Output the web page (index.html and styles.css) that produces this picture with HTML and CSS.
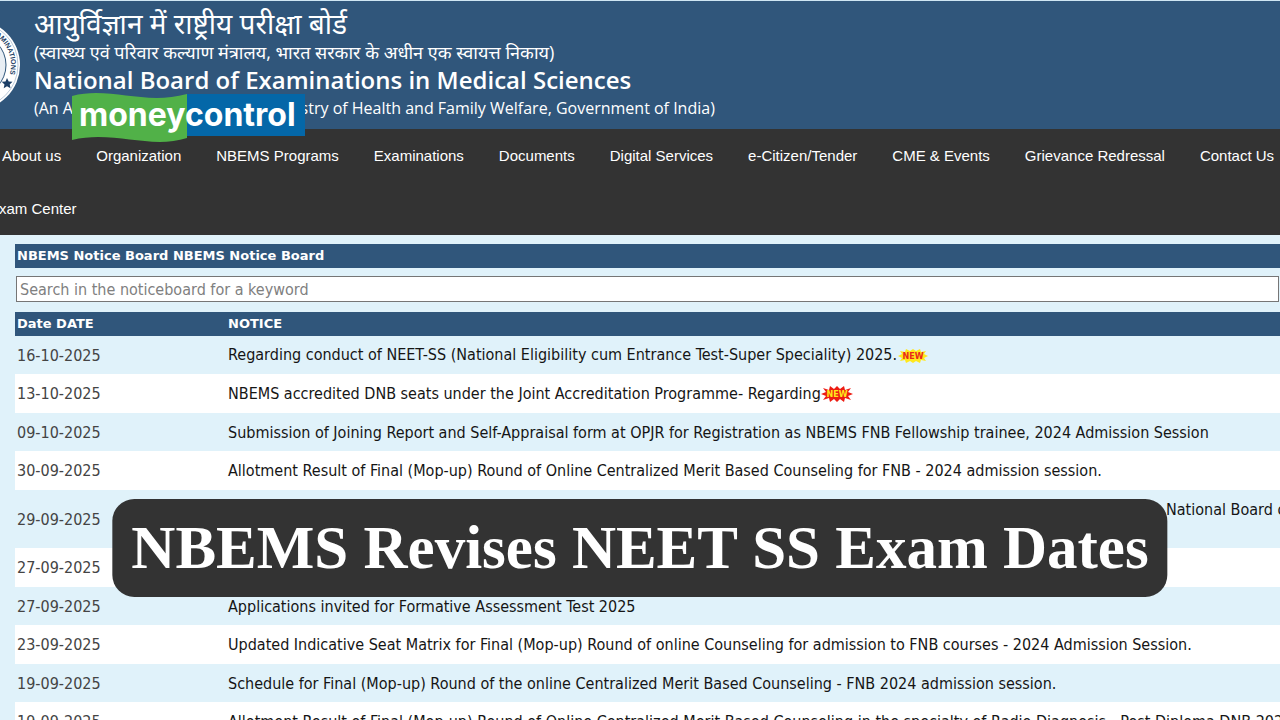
FILE: index.html
```html
<!DOCTYPE html>
<html lang="en">
<head>
<meta charset="utf-8">
<title>National Board of Examinations in Medical Sciences</title>
<link rel="stylesheet" href="styles.css">
</head>
<body>
<header class="masthead">
  <svg class="seal" viewBox="0 0 20 90" aria-hidden="true">
    <defs><path id="ring" d="M-61 45 A36 36 0 1 1 9.800 54.300"/></defs>
    <circle cx="-25" cy="45" r="45" fill="#fff"/>
    <circle cx="-25" cy="45" r="43" fill="none" stroke="#8fa6bf" stroke-width=".6"/>
    <circle cx="-25" cy="45" r="31" fill="#e8eef4" stroke="#2f567b" stroke-width="1"/>
    <text class="seal-text"><textPath href="#ring" startOffset="100%">EXAMINATIONS</textPath></text>
    <path d="M7 58l1.700 3.400 3.800.4-2.800 2.600.8 3.800-3.500-1.900-3.300 1.900.8-3.800-2.800-2.600 3.800-.4z" fill="#1d3f66"/>
  </svg>
  <div class="titles">
    <p class="hindi-name" lang="hi">आयुर्विज्ञान में राष्ट्रीय परीक्षा बोर्ड</p>
    <p class="hindi-sub" lang="hi">(स्वास्थ्य एवं परिवार कल्याण मंत्रालय, भारत सरकार के अधीन एक स्वायत्त निकाय)</p>
    <h1 class="name">National Board of Examinations in Medical Sciences</h1>
    <p class="sub">(An Autonomous Society of the Ministry of Health and Family Welfare, Government of India)</p>
  </div>
  <div class="sponsor">
    <svg class="sponsor-flag" viewBox="0 0 233 50" aria-hidden="true">
      <path d="M114 1h119v42H114z" fill="#0467a8"/>
      <path d="M0 3C38-7 72 13 115 1v44C78 57 42 37 0 47z" fill="#51b148"/>
    </svg>
    <span class="wordmark">moneycontrol</span>
  </div>
</header>
<nav class="menu">
  <div class="menu-row">
    <a href="#">About us</a><a href="#">Organization</a><a href="#">NBEMS Programs</a><a href="#">Examinations</a><a href="#">Documents</a><a href="#">Digital Services</a><a href="#">e-Citizen/Tender</a><a href="#">CME &amp; Events</a><a href="#">Grievance Redressal</a><a href="#">Contact Us</a>
  </div>
  <div class="menu-row menu-row-second"><a href="#">Exam Center</a></div>
</nav>
<main class="board">
  <h2 class="board-title">NBEMS Notice Board NBEMS Notice Board</h2>
  <input class="search" type="text" aria-label="Search notices" placeholder="Search in the noticeboard for a keyword">
  <table class="notices">
    <thead><tr><th class="date">Date DATE</th><th>NOTICE</th></tr></thead>
    <tbody>
      <tr><td>16-10-2025</td><td>Regarding conduct of NEET-SS (National Eligibility cum Entrance Test-Super Speciality) 2025.<svg class="new" viewBox="0 0 32 18" role="img" aria-label="New"><path d="M1 9l4-2-2-3 5 1 1-3 4 2 3-2 3 2 4-2 1 3 5-1-2 3 4 2-4 2 2 3-5-1-1 3-4-2-3 2-3-2-4 2-1-3-5 1 2-3z" fill="#ffe81c"/><text x="16" y="12" class="new-red">NEW</text></svg></td></tr>
      <tr><td>13-10-2025</td><td>NBEMS accredited DNB seats under the Joint Accreditation Programme- Regarding<svg class="new" viewBox="0 0 32 18" role="img" aria-label="New"><path d="M0 9l5-2-3-4 6 2 1-4 4 3 3-3 3 3 4-3 1 4 6-2-3 4 5 2-5 2 3 4-6-2-1 4-4-3-3 3-3-3-4 3-1-4-6 2 3-4z" fill="#ed1c12"/><text x="16" y="12" class="new-yellow">NEW</text></svg></td></tr>
      <tr><td>09-10-2025</td><td>Submission of Joining Report and Self-Appraisal form at OPJR for Registration as NBEMS FNB Fellowship trainee, 2024 Admission Session</td></tr>
      <tr><td>30-09-2025</td><td>Allotment Result of Final (Mop-up) Round of Online Centralized Merit Based Counseling for FNB - 2024 admission session.</td></tr>
      <tr class="tall"><td>29-09-2025</td><td><span class="trailing">National Board of</span></td></tr>
      <tr><td>27-09-2025</td><td></td></tr>
      <tr><td>27-09-2025</td><td>Applications invited for Formative Assessment Test 2025</td></tr>
      <tr><td>23-09-2025</td><td>Updated Indicative Seat Matrix for Final (Mop-up) Round of online Counseling for admission to FNB courses - 2024 Admission Session.</td></tr>
      <tr><td>19-09-2025</td><td>Schedule for Final (Mop-up) Round of the online Centralized Merit Based Counseling - FNB 2024 admission session.</td></tr>
      <tr><td>19-09-2025</td><td>Allotment Result of Final (Mop-up) Round of Online Centralized Merit Based Counseling in the specialty of Radio Diagnosis - Post Diploma DNB 2025</td></tr>
    </tbody>
  </table>
</main>
<div class="headline">NBEMS Revises NEET SS Exam Dates</div>
</body>
</html>
```
FILE: styles.css
```css
* { box-sizing: border-box; }
html, body { height: 100%; }
body {
  margin: 0;
  position: relative;
  overflow: hidden;
  background: #e0f2fa;
  font-family: "DejaVu Sans Condensed", "DejaVu Sans", sans-serif;
  font-size: 16px;
  color: #151515;
}
p, h1, h2 { margin: 0; font-weight: 400; }

.masthead {
  position: relative;
  display: flex;
  padding: 4px 0;
  border-top: 1px solid #cfe6f3;
  background: #30567b;
  color: #fff;
  height: 129px;
}
.seal { width: 20px; height: 90px; margin: 15px 14px 0 0; flex: none; }
.seal-text { font: 700 7px "Liberation Sans", sans-serif; fill: #1d3f66; text-anchor: end; }
.titles { white-space: nowrap; font-family: "Open Sans", "Noto Sans", sans-serif; }
.hindi-name { font-size: 28px; line-height: 36px; }
.hindi-sub { font-size: 18px; line-height: 22px; }
.name { font-size: 24px; line-height: 34px; font-weight: 600; }
.sub { font-size: 16px; line-height: 22px; }

.sponsor {
  position: absolute;
  left: 72px;
  top: 92px;
  z-index: 1;
  display: flex;
  padding: 0 7px;
  font: 700 32px/44px Inter, sans-serif;
}
.sponsor-flag { position: absolute; left: 0; top: 0; width: 233px; height: 50px; }
.wordmark { position: relative; }

.menu {
  background: #333;
  color: #fff;
  font: 15px/53px "Liberation Sans", Arial, sans-serif;
}
.menu-row { display: flex; gap: 35px; padding-left: 2px; white-space: nowrap; }
.menu-row-second { margin-left: -13px; }
.menu a { color: inherit; text-decoration: none; }

.board { padding: 9px 0 0 15px; }
.board-title, .notices th {
  background: #30567b;
  color: #fff;
  font: 700 13px/24px "DejaVu Sans", Verdana, sans-serif;
  padding: 0 2px;
  text-align: left;
}
.search {
  display: block;
  width: calc(100% - 2px);
  height: 26px;
  margin: 8px 1px 10px;
  padding: 0 3px;
  border: 1px solid #767676;
  font: inherit;
}
.search::placeholder { color: #808080; }

.notices { width: 100%; table-layout: fixed; border-collapse: collapse; white-space: nowrap; }
.notices .date { width: 211px; }
.notices td { height: 38px; padding: 0 2px; }
.notices td:first-child { color: #444; }
.notices tbody tr:nth-child(even) { background: #fff; }
.notices tbody tr:nth-child(even) td { height: 39px; }
.notices .tall td { height: 58px; }
.trailing { display: block; padding: 0 0 20px 938px; }
.new { width: 32px; height: 18px; vertical-align: middle; }
.new text { font: 700 8px "DejaVu Sans", sans-serif; text-anchor: middle; }
.new .new-red { fill: #e8291c; }
.new .new-yellow { fill: #ffe81c; }

.headline {
  position: absolute;
  left: 50%;
  top: 499px;
  transform: translateX(-50%);
  padding: 0 19px;
  border-radius: 22px;
  background: #333;
  color: #fff;
  white-space: nowrap;
  font: 700 61px/98px "Liberation Serif", serif;
}
```
